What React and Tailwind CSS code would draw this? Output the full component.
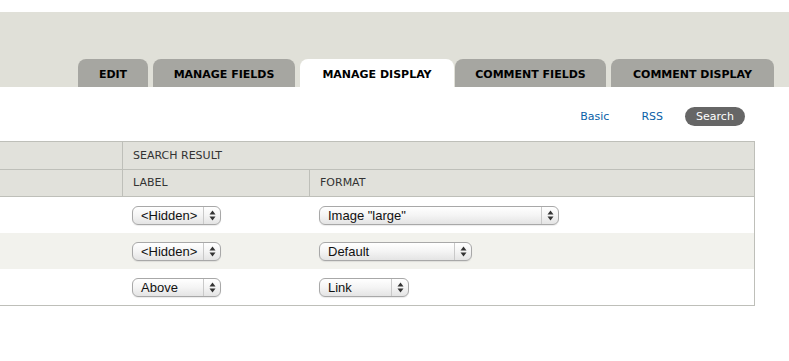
import React from 'react'

const tabs = [
  { label: 'EDIT', w: 'w-[70px]' },
  { label: 'MANAGE FIELDS', w: 'w-[142px]' },
  { label: 'MANAGE DISPLAY', w: 'w-[154px]', active: true },
  { label: 'COMMENT FIELDS', w: 'w-[151px]' },
  { label: 'COMMENT DISPLAY', w: 'w-[163px]' },
]

const rows = [
  { label: '<Hidden>', format: 'Image "large"', fw: 'w-[240px]' },
  { label: '<Hidden>', format: 'Default', fw: 'w-[153px]', striped: true },
  { label: 'Above', format: 'Link', fw: 'w-[90px]' },
]

// fake mac style select box
function Select({ value, width }) {
  return (
    <div className={`${width} h-[19px] flex items-stretch rounded-[6px] border border-[#a8a8a8] bg-gradient-to-b from-white via-[#f4f4f4] to-[#e4e4e4] shadow-[0_1px_1px_rgba(0,0,0,0.08)]`}>
      <span className="flex-1 pl-[8px] leading-[17px] text-[13px] text-[#111] font-['Liberation_Sans',Arial,sans-serif] whitespace-nowrap overflow-hidden">
        {value}
      </span>
      <span className="w-[17px] flex items-center justify-center border-l border-[#c9c9c9]">
        <svg width="7" height="11" viewBox="0 0 7 11">
          <path d="M3.5 0.5 L6.5 4.5 L0.5 4.5 Z" fill="#333" />
          <path d="M3.5 10.5 L6.5 6.5 L0.5 6.5 Z" fill="#333" />
        </svg>
      </span>
    </div>
  )
}

export default function App() {
  return (
    <div className="w-[789px] h-[361px] bg-white overflow-hidden font-['DejaVu_Sans',Verdana,sans-serif]">

      {/* primary tabs */}
      <div className="mt-[12px] h-[75px] bg-[#e0e0d8] flex items-end pl-[78px]">
        {tabs.map((t, i) => (
          <div
            key={t.label}
            className={`${t.w} ${i > 0 && i !== 3 ? 'ml-[5px]' : ''} ${i === 3 ? 'ml-[1px]' : ''} h-[28px] rounded-t-[8px] flex justify-center pt-[10px] text-[11px] font-bold leading-none text-black whitespace-nowrap ${t.active ? 'bg-white' : 'bg-[#a6a6a1]'}`}
          >
            {t.label}
          </div>
        ))}
      </div>

      {/* secondary tabs */}
      <div className="h-[54px] flex justify-end items-start pt-[20px] pr-[44px] gap-[12px] text-[11px]">
        <span className="h-[19px] px-[10px] leading-[19px] text-[#0b5fa8]">Basic</span>
        <span className="h-[19px] px-[10px] leading-[19px] text-[#0b5fa8]">RSS</span>
        <span className="h-[19px] w-[60px] text-center leading-[19px] rounded-full bg-[#666] text-white">Search</span>
      </div>

      {/* table */}
      <div className="w-[755px] border-t border-r border-b border-[#bebfb9] text-[11px] text-[#333]">
        <div className="h-[28px] flex bg-[#e1e1db] border-b border-[#bebfb9]">
          <div className="w-[122px]" />
          <div className="flex-1 border-l border-[#bebfb9] pl-[10px] leading-[27px]">SEARCH RESULT</div>
        </div>
        <div className="h-[27px] flex bg-[#e1e1db] border-b border-[#bebfb9]">
          <div className="w-[122px]" />
          <div className="w-[187px] border-l border-[#bebfb9] pl-[10px] leading-[26px]">LABEL</div>
          <div className="flex-1 border-l border-[#bebfb9] pl-[10px] leading-[26px]">FORMAT</div>
        </div>
        {rows.map((r, i) => (
          <div key={i} className={`h-[36px] flex items-center ${r.striped ? 'bg-[#f2f2ed]' : 'bg-white'}`}>
            <div className="w-[122px]" />
            <div className="w-[187px] pl-[10px]">
              <Select value={r.label} width="w-[89px]" />
            </div>
            <div className="flex-1 pl-[10px]">
              <Select value={r.format} width={r.fw} />
            </div>
          </div>
        ))}
      </div>
    </div>
  )
}
